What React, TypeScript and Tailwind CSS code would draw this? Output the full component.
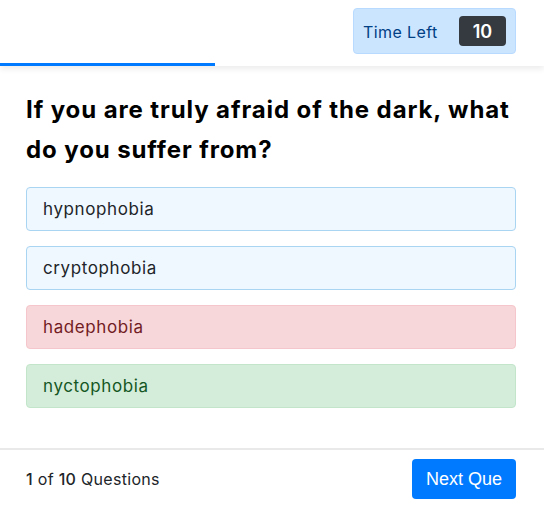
import React from "react";

const options = [
  { text: "hypnophobia", cls: "bg-[#f0f8ff] border-[#a9d4f2] text-[#212529]" },
  { text: "cryptophobia", cls: "bg-[#f0f8ff] border-[#a9d4f2] text-[#212529]" },
  { text: "hadephobia", cls: "bg-[#f8d7da] border-[#f5c6cb] text-[#721c24]" },
  { text: "nyctophobia", cls: "bg-[#d4edda] border-[#c3e6cb] text-[#155724]" },
];

export default function App() {
  return (
    <div className="w-[544px] h-[506px] bg-white overflow-hidden font-['Inter','Noto_Sans',sans-serif] text-[#212529]">
      <header className="relative h-[66px] flex items-start justify-end pr-[28px] pt-[8px] shadow-[0_3px_6px_rgba(0,0,0,0.08)]">
        <div className="flex items-center h-[46px] w-[163px] pl-[9px] pr-[9px] justify-between rounded-[4px] bg-[#cce5ff] border border-[#b8daff] text-[#004085]">
          <span className="text-[16px] tracking-[0.4px] pt-[2px]">Time Left</span>
          <span className="h-[30px] w-[47px] flex items-center justify-center rounded-[4px] bg-[#343a40] text-white text-[18px] font-semibold">10</span>
        </div>
        <div className="absolute left-0 bottom-0 h-[3px] w-[215px] bg-[#007bff]" />
      </header>
      <main className="px-[26px] pt-[24px]">
        <h1 className="text-[24px] leading-[40px] font-bold tracking-[0.9px] text-black">
          If you are truly afraid of the dark, what do you suffer from?
        </h1>
        <div className="mt-[17px] flex flex-col gap-[15px] pr-[2px]">
          {options.map((o) => (
            <div key={o.text} className={`h-[44px] flex items-center px-[16px] pt-[2px] rounded-[4px] border text-[17px] tracking-[0.6px] ${o.cls}`}>
              {o.text}
            </div>
          ))}
        </div>
      </main>
      <footer className="mt-[40px] border-t-2 border-[#e9e9e9] h-[58px] flex items-center justify-between px-[26px] pr-[28px]">
        <span className="text-[16px] tracking-[0.3px] pt-[2px]"><span className="font-medium">1</span> of <span className="font-medium">10</span> Questions</span>
        <button className="mt-[2px] h-[40px] w-[104px] flex items-center pl-[14px] rounded-[4px] bg-[#007bff] text-white text-[18px] font-['Liberation_Sans',sans-serif]">
          <span className="block whitespace-nowrap text-left">Next Que</span>
        </button>
      </footer>
    </div>
  );
}
